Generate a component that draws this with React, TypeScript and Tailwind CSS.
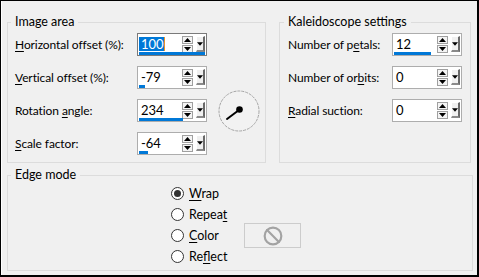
import React from 'react';
import { Ban } from 'lucide-react';

const font = { fontFamily: 'Lato, "Noto Sans", sans-serif' };

const Arrow = ({ up }: { up?: boolean }) => (
  <svg width="7" height="4" viewBox="0 0 7 4">
    <path d={up ? 'M0 4 L3.5 0 L7 4 Z' : 'M0 0 L3.5 4 L7 0 Z'} fill="#000" />
  </svg>
);

type SpinProps = { value: string; bar: number; selected?: boolean };

// Spin box with dropdown and the blue value bar underneath
const Spin: React.FC<SpinProps> = ({ value, bar, selected }) => (
  <div className={`w-[70px] h-[23px] bg-white border flex flex-col ${selected ? 'border-[#7a7a7a]' : 'border-[#adadad]'}`}>
    <div className="h-[18px] flex items-start">
      <div className="flex-1 flex pl-[1px] pt-[3px]">
        {selected ? (
          <span className="h-[14px] leading-[14px] pl-[2px] bg-[#0078d7] text-white text-[13px] flex">
            {value}
            <span className="w-[1px] h-[14px] bg-[#e8922a]" />
          </span>
        ) : (
          <span className="h-[14px] leading-[14px] pl-[2px] text-[#000] text-[13px]">{value}</span>
        )}
      </div>
      <div className="w-[11px] mt-[2px] flex flex-col gap-[1px]">
        <div className="h-[8px] border border-[#a0a0a0] bg-[#f4f4f4] flex items-center justify-center">
          <Arrow up />
        </div>
        <div className="h-[8px] border border-[#a0a0a0] bg-[#f4f4f4] flex flex-col items-center justify-center">
          <Arrow />
        </div>
      </div>
      <div className="w-[9px] h-[16px] mt-[2px] ml-[3px] mr-[1px] bg-[#f0f0f0] border-t border-l border-t-white border-l-white border-r-2 border-b-2 border-r-[#696969] border-b-[#8a8a8a] flex items-center justify-center">
        <Arrow />
      </div>
    </div>
    <div className="h-[3px] pl-[1px]">
      <div className="h-[3px] bg-[#0078d7]" style={{ width: bar }} />
    </div>
  </div>
);

const Row: React.FC<{ label: React.ReactNode; labelW: string; children: React.ReactNode }> = ({ label, labelW, children }) => (
  <div className="h-[23px] flex items-center">
    <div className={`${labelW} text-[12px] tracking-[-0.1px] text-black leading-[16px]`}>{label}</div>
    {children}
  </div>
);

const Knob = () => (
  <div className="ml-[11px] -my-[9px]">
    <svg width="42" height="42" viewBox="0 0 42 42">
      <circle cx="21" cy="21" r="20" fill="#f2f2f2" stroke="#a5a5a5" strokeWidth="1" strokeDasharray="3 1" />
      <line x1="9" y1="29" x2="21" y2="20" stroke="#000" strokeWidth="2" strokeLinecap="round" />
      <circle cx="21.5" cy="19.5" r="3.3" fill="#000" />
    </svg>
  </div>
);

const Radio: React.FC<{ checked?: boolean; children: React.ReactNode }> = ({ checked, children }) => (
  <div className="h-[21px] flex items-center gap-[5px]">
    <div className="w-[13px] h-[13px] rounded-full border border-[#333] bg-white flex items-center justify-center">
      {checked && <div className="w-[7px] h-[7px] rounded-full bg-[#333]" />}
    </div>
    <span className="text-[12.5px] text-black leading-[16px]">{children}</span>
  </div>
);

const U: React.FC<{ children: React.ReactNode }> = ({ children }) => (
  <span className="underline underline-offset-[2px] decoration-1">{children}</span>
);

const App: React.FC = () => {
  return (
    <div style={font} className="w-[479px] h-[277px] bg-[#f0f0f0] border-t border-l border-r-2 border-b-2 border-black">
      <div className="h-full border-l border-white pl-[5px] pt-[13px] flex flex-col">
        {/* Top groups */}
        <div className="flex gap-[13px]">
          <fieldset className="w-[259px] border border-[#dcdcdc] pl-[7px] pt-[3px] pb-[7px]">
            <legend className="-ml-[4px] px-[4px] text-[12.5px] leading-[16px] text-black">Image area</legend>
            <div className="flex flex-col gap-[10px]">
              <Row labelW="w-[122px]" label={<><U>H</U>orizontal offset (%):</>}>
                <Spin value="100" bar={66} selected />
              </Row>
              <Row labelW="w-[122px]" label={<><U>V</U>ertical offset (%):</>}>
                <Spin value="-79" bar={6} />
              </Row>
              <Row labelW="w-[122px]" label={<>Rotation <U>a</U>ngle:</>}>
                <Spin value="234" bar={44} />
                <Knob />
              </Row>
              <Row labelW="w-[122px]" label={<><U>S</U>cale factor:</>}>
                <Spin value="-64" bar={9} />
              </Row>
            </div>
          </fieldset>
          <fieldset className="w-[192px] border border-[#dcdcdc] pl-[8px] pt-[3px] pb-[7px]">
            <legend className="-ml-[4px] px-[4px] text-[12.5px] leading-[16px] text-black">Kaleidoscope settings</legend>
            <div className="flex flex-col gap-[10px]">
              <Row labelW="w-[104px]" label={<>Number of p<U>e</U>tals:</>}>
                <Spin value="12" bar={37} />
              </Row>
              <Row labelW="w-[104px]" label={<>Number of or<U>b</U>its:</>}>
                <Spin value="0" bar={0} />
              </Row>
              <Row labelW="w-[104px]" label={<><U>R</U>adial suction:</>}>
                <Spin value="0" bar={0} />
              </Row>
            </div>
          </fieldset>
        </div>

        {/* Edge mode */}
        <fieldset className="mt-[4px] w-[466px] border border-[#dcdcdc] pl-[163px] pb-[3px]">
          <legend className="-ml-[160px] px-[4px] text-[12.5px] leading-[16px] text-black">Edge mode</legend>
          <div className="grid grid-cols-[73px_57px]">
            <div className="col-start-1 row-start-1"><Radio checked><U>W</U>rap</Radio></div>
            <div className="col-start-1 row-start-2"><Radio>Repea<U>t</U></Radio></div>
            <div className="col-start-1 row-start-3"><Radio><U>C</U>olor</Radio></div>
            <div className="col-start-1 row-start-4"><Radio>Re<U>f</U>lect</Radio></div>
            <div className="col-start-2 row-start-3 -my-[2px] h-[25px] border border-[#cccccc] bg-[#f0f0f0] flex items-center justify-center">
              <Ban size={20} strokeWidth={2.6} color="#a3a3a3" />
            </div>
          </div>
        </fieldset>
      </div>
    </div>
  );
};

export default App;
